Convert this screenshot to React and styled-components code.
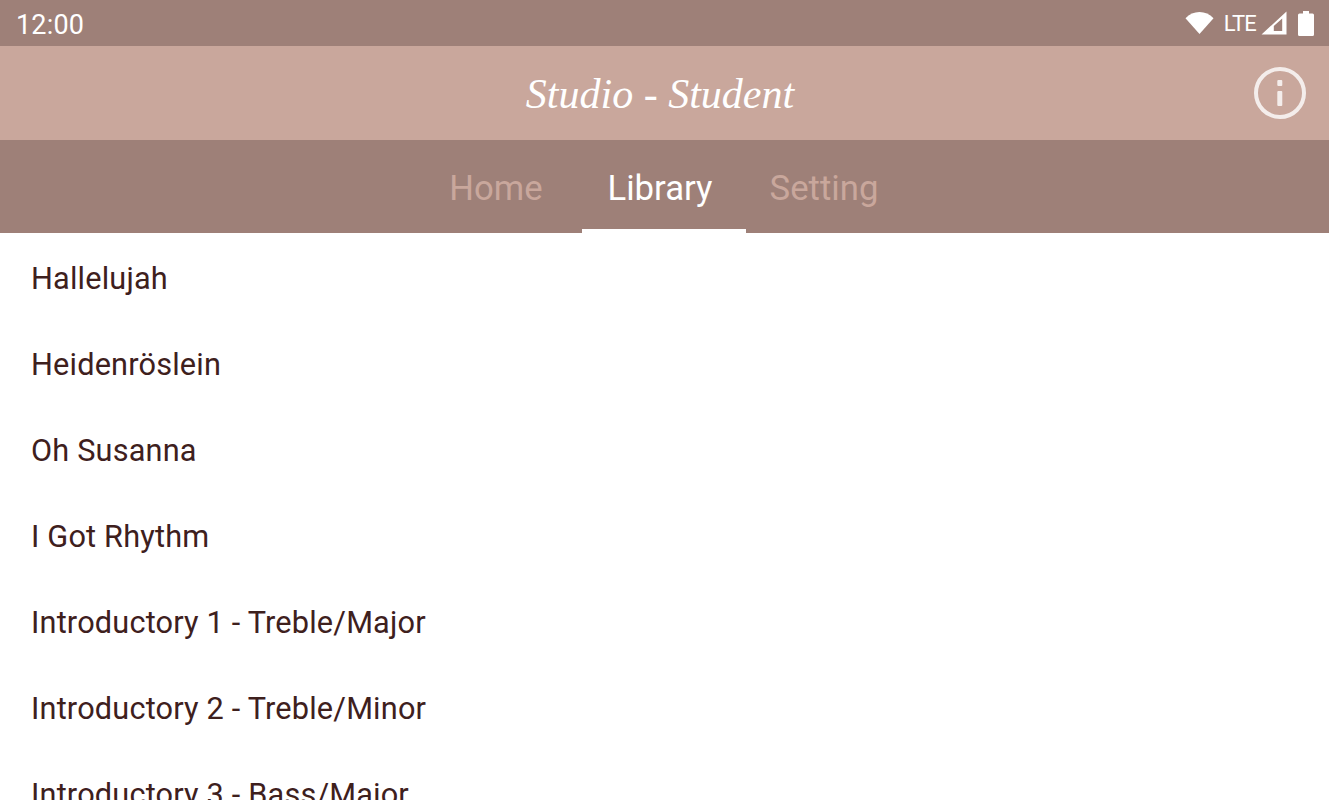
import React from "react"
import styled, { createGlobalStyle } from "styled-components"

const COLORS = {
  DARK: "#9e8078",
  LIGHT: "#c9a79c",
  TEXT: "#3e201d",
  WHITE: "#ffffff",
}

const GlobalStyle = createGlobalStyle`
  html, body {
    margin: 0;
    padding: 0;
    height: 100%;
    overflow: hidden;
    background: ${COLORS.WHITE};
    font-family: Roboto, "Liberation Sans", sans-serif;
  }
`

const Page = styled.div`
  display: flex;
  flex-direction: column;
  height: 800px;
  overflow: hidden;
`

const StatusBar = styled.div`
  display: flex;
  align-items: center;
  justify-content: space-between;
  flex: none;
  height: 46px;
  padding: 0 15px 0 16px;
  box-sizing: border-box;
  background: ${COLORS.DARK};
  color: ${COLORS.WHITE};
`

const Clock = styled.span`
  padding-top: 4px;
  font-size: 27px;
  line-height: 42px;
  letter-spacing: 0.2px;
`

const StatusIcons = styled.div`
  display: flex;
  align-items: center;
`

const Network = styled.span`
  padding-top: 2px;
  font-size: 22px;
  line-height: 44px;
  letter-spacing: -0.8px;
  margin: 0 5px 0 10px;
`

const Header = styled.header`
  display: flex;
  align-items: center;
  justify-content: center;
  position: relative;
  flex: none;
  height: 94px;
  padding: 1px 9px 0 0;
  box-sizing: border-box;
  background: ${COLORS.LIGHT};
`

const Title = styled.h1`
  margin: 0;
  font-family: "Liberation Serif", serif;
  font-size: 42px;
  font-style: italic;
  font-weight: 400;
  color: ${COLORS.WHITE};
`

const InfoButton = styled.div`
  position: absolute;
  top: 21px;
  right: 23px;
  width: 52px;
  height: 52px;
  opacity: 0.8;
`

const Tabs = styled.nav`
  display: flex;
  justify-content: center;
  flex: none;
  height: 93px;
  padding-right: 1px;
  box-sizing: border-box;
  background: ${COLORS.DARK};
`

const Tab = styled.div`
  display: flex;
  align-items: center;
  justify-content: center;
  width: 164px;
  padding: 6px 8px 0 0;
  box-sizing: border-box;
  font-size: 34.700px;
  color: ${props => (props.$active ? COLORS.WHITE : COLORS.LIGHT)};
  border-bottom: 4px solid ${props => (props.$active ? COLORS.WHITE : "transparent")};
`

const List = styled.ul`
  flex: 1;
  margin: 0;
  padding: 3px 0 0;
  list-style: none;
`

const Row = styled.li`
  height: 86px;
  padding-left: 31px;
  font-size: 30.700px;
  line-height: 86px;
  letter-spacing: 0.180px;
  color: ${COLORS.TEXT};
`

const WifiIcon = () => (
  <svg width="29" height="24" viewBox="0 0 30 24">
    <path d="M0.500 7C4.500 2.700 9.500 0.500 15 0.500s10.500 2.200 14.500 6.500L15 23.500z" fill="#fff" />
  </svg>
)

const SignalIcon = () => (
  <svg width="26" height="24" viewBox="0 0 26 24">
    <path
      d="M0.500 23.500L25.500 0.500v23zM12.800 20h8.400V7.500L12.800 15z"
      fill="#fff"
      fillRule="evenodd"
    />
  </svg>
)

const BatteryIcon = () => (
  <svg width="16" height="25" viewBox="0 0 16 25" style={{ marginLeft: 11 }}>
    <path
      d="M5 0h6v2.500h3.500a1.500 1.500 0 0 1 1.500 1.500v19.500a1.500 1.500 0 0 1-1.500 1.500h-13a1.500 1.500 0 0 1-1.500-1.500v-19.500a1.500 1.500 0 0 1 1.500-1.500h3.500z"
      fill="#fff"
    />
  </svg>
)

const InfoIcon = () => (
  <svg width="52" height="52" viewBox="0 0 52 52">
    <circle cx="26" cy="26" r="24" fill="none" stroke="#fff" strokeWidth="4" />
    <rect x="23.300" y="13" width="5" height="6" rx="1" fill="#fff" />
    <rect x="23.300" y="24" width="5" height="15" rx="1" fill="#fff" />
  </svg>
)

const SONGS = [
  "Hallelujah",
  "Heidenröslein",
  "Oh Susanna",
  "I Got Rhythm",
  "Introductory 1 - Treble/Major",
  "Introductory 2 - Treble/Minor",
  "Introductory 3 - Bass/Major",
]

const App = () => (
  <Page>
    <GlobalStyle />
    <StatusBar>
      <Clock>12:00</Clock>
      <StatusIcons>
        <WifiIcon />
        <Network>LTE</Network>
        <SignalIcon />
        <BatteryIcon />
      </StatusIcons>
    </StatusBar>
    <Header>
      <Title>Studio - Student</Title>
      <InfoButton>
        <InfoIcon />
      </InfoButton>
    </Header>
    <Tabs>
      <Tab>Home</Tab>
      <Tab $active>Library</Tab>
      <Tab>Setting</Tab>
    </Tabs>
    <List>
      {SONGS.map(song => <Row key={song}>{song}</Row>)}
    </List>
  </Page>
)

export default App
